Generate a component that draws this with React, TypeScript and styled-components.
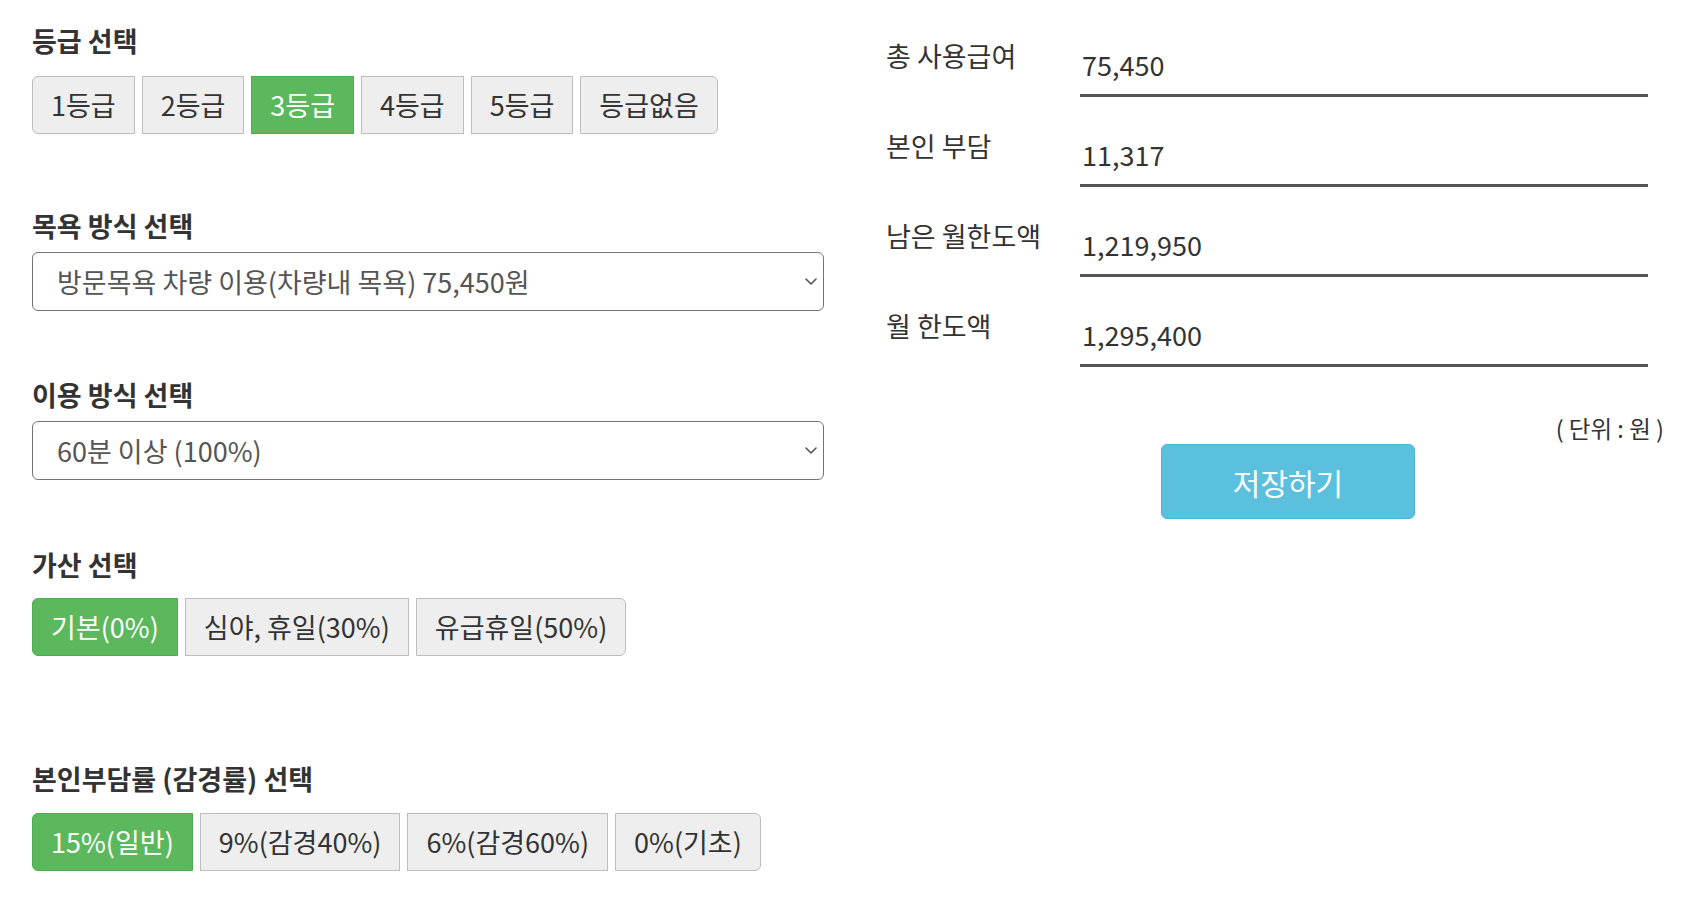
import React, { useState } from "react";
import styled, { createGlobalStyle } from "styled-components";

const GlobalStyle = createGlobalStyle`
  html, body { margin: 0; padding: 0; background: #fff; }
  body { font-family: "Noto Sans CJK KR", "Noto Sans", sans-serif; color: #333; }
  * { box-sizing: border-box; }
`;

const Page = styled.div`
  display: flex;
  align-items: flex-start;
  padding: 22px 0 0 32px;
`;

const LeftColumn = styled.div`
  width: 792px;
  display: flex;
  flex-direction: column;
`;

const Section = styled.section<{ $top: number }>`
  margin-top: ${(p) => p.$top}px;
`;

const Heading = styled.h3<{ $gap: number }>`
  margin: 0 0 ${(p) => p.$gap}px;
  font-size: 27px;
  font-weight: 700;
  line-height: 38px;
  color: #333;
`;

const ButtonRow = styled.div`
  display: flex;
  gap: 7px;
`;

const ChoiceButton = styled.button<{ $active: boolean }>`
  font-family: inherit;
  font-size: 27px;
  line-height: 36px;
  padding: 10px 18px;
  margin: 0;
  border: 1px solid ${(p) => (p.$active ? "#4cae4c" : "#bdbdbd")};
  background: ${(p) => (p.$active ? "#5cb85c" : "#eeeeee")};
  color: ${(p) => (p.$active ? "#ffffff" : "#333333")};
  border-radius: 0;
  white-space: nowrap;
  cursor: pointer;
  &:first-child {
    border-radius: 6px 0 0 6px;
  }
  &:last-child {
    border-radius: 0 6px 6px 0;
  }
`;

const SelectWrap = styled.div`
  position: relative;
  width: 792px;
`;

const Select = styled.select`
  appearance: none;
  -webkit-appearance: none;
  width: 100%;
  height: 59px;
  padding: 0 50px 0 24px;
  font-family: inherit;
  font-size: 27px;
  color: #555;
  background: #fff;
  border: 1px solid #737373;
  border-radius: 6px;
  outline: none;
`;

const Chevron = styled.svg`
  position: absolute;
  right: 7px;
  top: 26px;
  width: 12px;
  height: 7px;
  pointer-events: none;
`;

const RightColumn = styled.div`
  margin-left: 62px;
  width: 780px;
  padding-top: 16px;
  display: flex;
  flex-direction: column;
`;

const SummaryList = styled.div`
  display: flex;
  flex-direction: column;
  gap: 31px;
`;

const SummaryRow = styled.div`
  display: flex;
  align-items: flex-start;
`;

const SummaryLabel = styled.label`
  width: 194px;
  font-size: 27px;
  line-height: 36px;
  color: #333;
`;

const SummaryValue = styled.input`
  width: 568px;
  height: 59px;
  margin: 0;
  padding: 0 0 4px 2px;
  border: none;
  border-bottom: 3px solid #555;
  font-family: inherit;
  font-size: 27px;
  color: #333;
  background: transparent;
  outline: none;
`;

const UnitNote = styled.div`
  margin-top: 48px;
  padding-right: 2px;
  text-align: right;
  font-size: 23.5px;
  line-height: 27px;
  color: #333;
`;

const SaveButton = styled.button`
  margin: 2px 0 0 275px;
  width: 254px;
  height: 75px;
  background: #5bc0de;
  border: 1px solid #46b8da;
  border-radius: 6px;
  color: #fff;
  font-family: inherit;
  font-size: 30px;
  cursor: pointer;
`;

function ChoiceGroup({ options, value, onChange }: { options: string[]; value: number; onChange: (i: number) => void }) {
  return (
    <ButtonRow>
      {options.map((o, i) => (
        <ChoiceButton key={o} type="button" $active={i === value} onClick={() => onChange(i)}>
          {o}
        </ChoiceButton>
      ))}
    </ButtonRow>
  );
}

function SelectBox({ options }: { options: string[] }) {
  return (
    <SelectWrap>
      <Select defaultValue={options[0]}>
        {options.map((o) => (
          <option key={o}>{o}</option>
        ))}
      </Select>
      <Chevron viewBox="0 0 12 7" fill="none">
        <path d="M1 1l5 5 5-5" stroke="#555" strokeWidth="1.6" strokeLinecap="round" strokeLinejoin="round" />
      </Chevron>
    </SelectWrap>
  );
}

const summary = [
  ["총 사용급여", "75,450"],
  ["본인 부담", "11,317"],
  ["남은 월한도액", "1,219,950"],
  ["월 한도액", "1,295,400"],
];

export default function App() {
  const [grade, setGrade] = useState(2);
  const [extra, setExtra] = useState(0);
  const [rate, setRate] = useState(0);

  return (
    <>
      <GlobalStyle />
      <Page>
        <LeftColumn>
          <Section $top={0}>
            <Heading $gap={16}>등급 선택</Heading>
            <ChoiceGroup
              options={["1등급", "2등급", "3등급", "4등급", "5등급", "등급없음"]}
              value={grade}
              onChange={setGrade}
            />
          </Section>
          <Section $top={73}>
            <Heading $gap={7}>목욕 방식 선택</Heading>
            <SelectBox options={["방문목욕 차량 이용(차량내 목욕) 75,450원", "방문목욕 차량 이용(가정내 목욕) 68,030원", "차량 미이용 50,940원"]} />
          </Section>
          <Section $top={65}>
            <Heading $gap={7}>이용 방식 선택</Heading>
            <SelectBox options={["60분 이상 (100%)", "40분 이상 60분 미만 (80%)"]} />
          </Section>
          <Section $top={66}>
            <Heading $gap={14}>가산 선택</Heading>
            <ChoiceGroup options={["기본(0%)", "심야, 휴일(30%)", "유급휴일(50%)"]} value={extra} onChange={setExtra} />
          </Section>
          <Section $top={104}>
            <Heading $gap={15}>본인부담률 (감경률) 선택</Heading>
            <ChoiceGroup
              options={["15%(일반)", "9%(감경40%)", "6%(감경60%)", "0%(기초)"]}
              value={rate}
              onChange={setRate}
            />
          </Section>
        </LeftColumn>
        <RightColumn>
          <SummaryList>
            {summary.map(([label, value]) => (
              <SummaryRow key={label}>
                <SummaryLabel>{label}</SummaryLabel>
                <SummaryValue readOnly value={value} />
              </SummaryRow>
            ))}
          </SummaryList>
          <UnitNote>( 단위 : 원 )</UnitNote>
          <SaveButton type="button">저장하기</SaveButton>
        </RightColumn>
      </Page>
    </>
  );
}
